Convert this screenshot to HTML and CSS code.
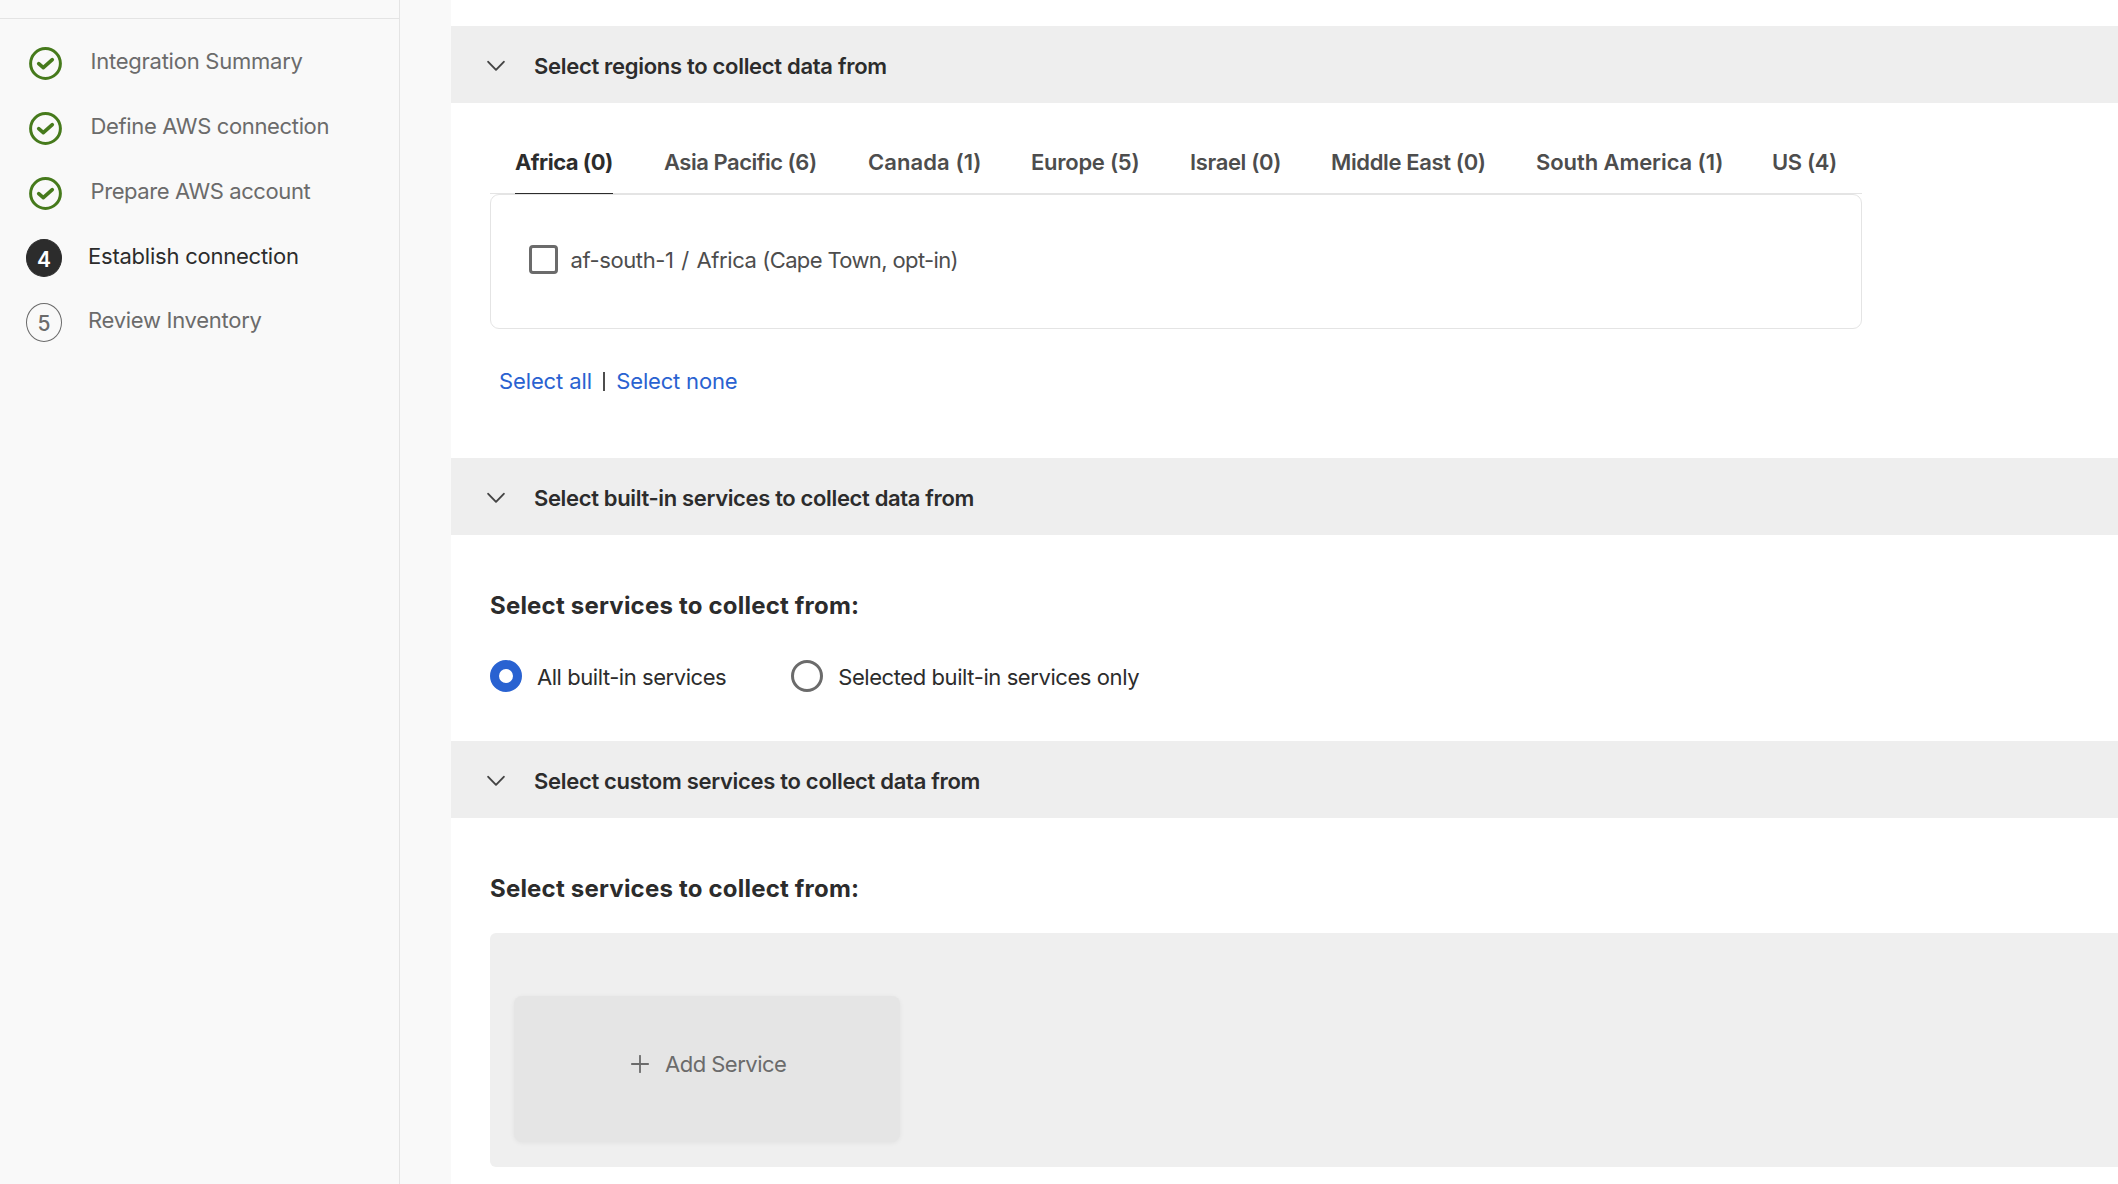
FILE: index.html
```html
<!DOCTYPE html>
<html lang="en">
<head>
<meta charset="utf-8">
<title>Establish connection</title>
<link rel="stylesheet" href="styles.css">
</head>
<body>
<div class="app">
  <nav class="sidebar">
    <div class="sidebar-top"></div>
    <ol class="steps">
      <li class="step done"><svg class="check" viewBox="0 0 33 33"><circle cx="16.5" cy="16.5" r="14.9"/><path d="M9.7 16.6l4.6 4.1 9-8.1"/></svg><span class="t-summary">Integration Summary</span></li>
      <li class="step done"><svg class="check" viewBox="0 0 33 33"><circle cx="16.5" cy="16.5" r="14.9"/><path d="M9.7 16.6l4.6 4.1 9-8.1"/></svg><span class="t-define">Define AWS connection</span></li>
      <li class="step done"><svg class="check" viewBox="0 0 33 33"><circle cx="16.5" cy="16.5" r="14.9"/><path d="M9.7 16.6l4.6 4.1 9-8.1"/></svg><span class="t-prepare">Prepare AWS account</span></li>
      <li class="step current"><b class="num">4</b><span class="t-establish">Establish connection</span></li>
      <li class="step next"><b class="num">5</b><span class="t-review">Review Inventory</span></li>
    </ol>
  </nav>
  <main class="content">
    <section>
      <header class="bar"><svg class="chevron" viewBox="0 0 18 12"><path d="M1.2 1.8L9 9.8l7.800-8"/></svg><h2>Select regions to collect data from</h2></header>
      <div class="regions">
        <div class="tabs">
          <span class="tab active">Africa (0)</span>
          <span class="tab t-asia">Asia Pacific (6)</span>
          <span class="tab t-canada">Canada (1)</span>
          <span class="tab t-europe">Europe (5)</span>
          <span class="tab">Israel (0)</span>
          <span class="tab">Middle East (0)</span>
          <span class="tab t-south">South America (1)</span>
          <span class="tab">US (4)</span>
        </div>
        <div class="panel"><span class="checkbox"></span><span class="t-region">af-south-1 <span class="slash">/</span> Africa <span class="place">(Cape Town, opt-in)</span></span></div>
        <div class="links"><a class="t-all">Select all</a><i class="sep"></i><a class="t-none">Select none</a></div>
      </div>
    </section>
    <section>
      <header class="bar"><svg class="chevron" viewBox="0 0 18 12"><path d="M1.2 1.8L9 9.8l7.800-8"/></svg><h2 class="t-builtin">Select built-in services to collect data from</h2></header>
      <div class="builtin">
        <h3>Select services to collect from:</h3>
        <div class="radios">
          <span class="radio on"></span><span class="t-allbuilt">All built-in services</span>
          <span class="radio"></span><span class="t-selected">Selected built-in services only</span>
        </div>
      </div>
    </section>
    <section>
      <header class="bar"><svg class="chevron" viewBox="0 0 18 12"><path d="M1.2 1.8L9 9.8l7.800-8"/></svg><h2>Select custom services to collect data from</h2></header>
      <div class="custom">
        <h3>Select services to collect from:</h3>
        <div class="services">
          <div class="add"><svg class="plus" viewBox="0 0 18 18"><path d="M9 .8v16.400M.8 9h16.400"/></svg><span>Add Service</span></div>
        </div>
      </div>
    </section>
  </main>
</div>
</body>
</html>
```
FILE: styles.css
```css
* { box-sizing: border-box; }
body {
  margin: 0;
  background: #f9f9f9;
  font: 400 22px/26px Inter, "Liberation Sans", sans-serif;
  color: #2c2c2c;
}
h2, h3, ol { margin: 0; padding: 0; }

.app { display: flex; height: 1184px; overflow: hidden; }

/* Step list */
.sidebar { width: 400px; flex: none; border-right: 1px solid #e4e4e4; }
.sidebar-top { height: 19px; border-bottom: 1px solid #e4e4e4; }
.steps { list-style: none; padding-top: 9px; }
.step { height: 65px; display: flex; align-items: center; color: #6b6b6b; white-space: nowrap; }
.step.done { padding-left: 29px; gap: 28.5px; }
.step.current, .step.next { padding-left: 26px; gap: 26px; }
.step.current { color: #2c2c2c; }
.step.next { height: 64px; }
.check { width: 33px; height: 33px; margin-top: 6px; fill: none; stroke: #467a1c; stroke-width: 3; }
.check path { stroke-width: 3.6; stroke-linecap: round; stroke-linejoin: round; }
.num {
  width: 36px; height: 38px; margin-top: 5px; padding-top: 3px;
  display: flex; align-items: center; justify-content: center;
  border: 1px solid #6b6b6b; border-radius: 50%;
  font-size: 21px; font-weight: 500;
}
.current .num { background: #2c2c2c; border-color: #2c2c2c; color: #fff; font-weight: 600; }
.next .num { height: 39px; }
.t-summary { letter-spacing: -.24px; }
.t-define { letter-spacing: -.35px; }
.t-prepare { letter-spacing: -.41px; }
.t-establish { letter-spacing: -.23px; }
.t-review { letter-spacing: -.28px; }

/* Main column */
.content { flex: 1; margin-left: 51px; padding-top: 26px; background: #fff; min-width: 0; }
.bar { height: 77px; display: flex; align-items: center; gap: 29px; padding-left: 36px; background: #eee; }
.bar h2 { font-size: 22px; font-weight: 600; letter-spacing: -.3px; padding-top: 3px; }
.bar .t-builtin { letter-spacing: -.35px; }
.chevron { width: 18px; height: 12px; margin-top: 2px; fill: none; stroke: #444; stroke-width: 1.9; stroke-linecap: round; stroke-linejoin: round; }

.regions { height: 355px; padding: 46px 0 0 39px; }
.tabs {
  width: 1372px; height: 45px; padding-left: 25px;
  display: grid; grid-template-columns: 98px 153px 112px 108px 90px 154px 185px 65px; column-gap: 51px;
  border-bottom: 1px solid #e4e4e4;
}
.tab { height: 45px; line-height: 27px; color: #4d4d4d; font-weight: 600; letter-spacing: -.36px; white-space: nowrap; }
.tab.active { color: #2c2c2c; font-weight: 700; letter-spacing: -.48px; border-bottom: 1px solid #2c2c2c; }
.t-asia { letter-spacing: -.48px; }
.t-canada { letter-spacing: .08px; }
.t-europe { letter-spacing: -.26px; }
.t-south { letter-spacing: -.08px; }
.panel {
  width: 1372px; height: 135px; padding: 0 0 5px 38px;
  display: flex; align-items: center; gap: 12.500px;
  border: 1px solid #e4e4e4; border-radius: 9px; color: #4d4d4d;
}
.checkbox { width: 29px; height: 29px; border: 3px solid #6b6b6b; border-radius: 4px; }
.t-region { letter-spacing: -.41px; padding-top: 2px; }
.slash { margin: 0 2px; }
.place { letter-spacing: -.63px; }
.links { display: flex; align-items: center; padding: 39px 0 0 9px; color: #2962d1; }
.sep { width: 2px; height: 19px; background: #4d4d4d; margin: 0 11.500px 0 11px; }
.t-all { letter-spacing: -.12px; }
.t-none { letter-spacing: -.19px; }

h3 { font-size: 24px; line-height: 30px; font-weight: 700; letter-spacing: .2px; }
.builtin { height: 206px; padding: 56px 0 0 39px; }
.radios { display: flex; align-items: center; margin-top: 39px; }
.radio { width: 32px; height: 32px; border: 3px solid #6b6b6b; border-radius: 50%; background: #fff; }
.radio.on { border: 9.5px solid #2962d1; }
.radios span + span { margin-left: 15px; }
.radios .t-allbuilt + .radio { margin-left: 65px; }
.t-allbuilt { letter-spacing: -.45px; padding-top: 2px; }
.t-selected { letter-spacing: -.42px; padding-top: 2px; }

.custom { padding: 56px 0 0 39px; }
.services { height: 234px; margin-top: 29px; padding: 63px 0 0 24px; background: #efefef; border-radius: 6px 0 0 6px; }
.add {
  width: 386px; height: 146px; padding: 0 0 11px 117px;
  display: flex; align-items: center; gap: 16px;
  background: #e5e5e5; border-radius: 8px; box-shadow: 0 1px 5px rgba(0, 0, 0, .06);
  color: #6b6b6b; letter-spacing: -.51px;
}
.plus { width: 18px; height: 18px; stroke: #6b6b6b; stroke-width: 1.8; stroke-linecap: round; }
```
